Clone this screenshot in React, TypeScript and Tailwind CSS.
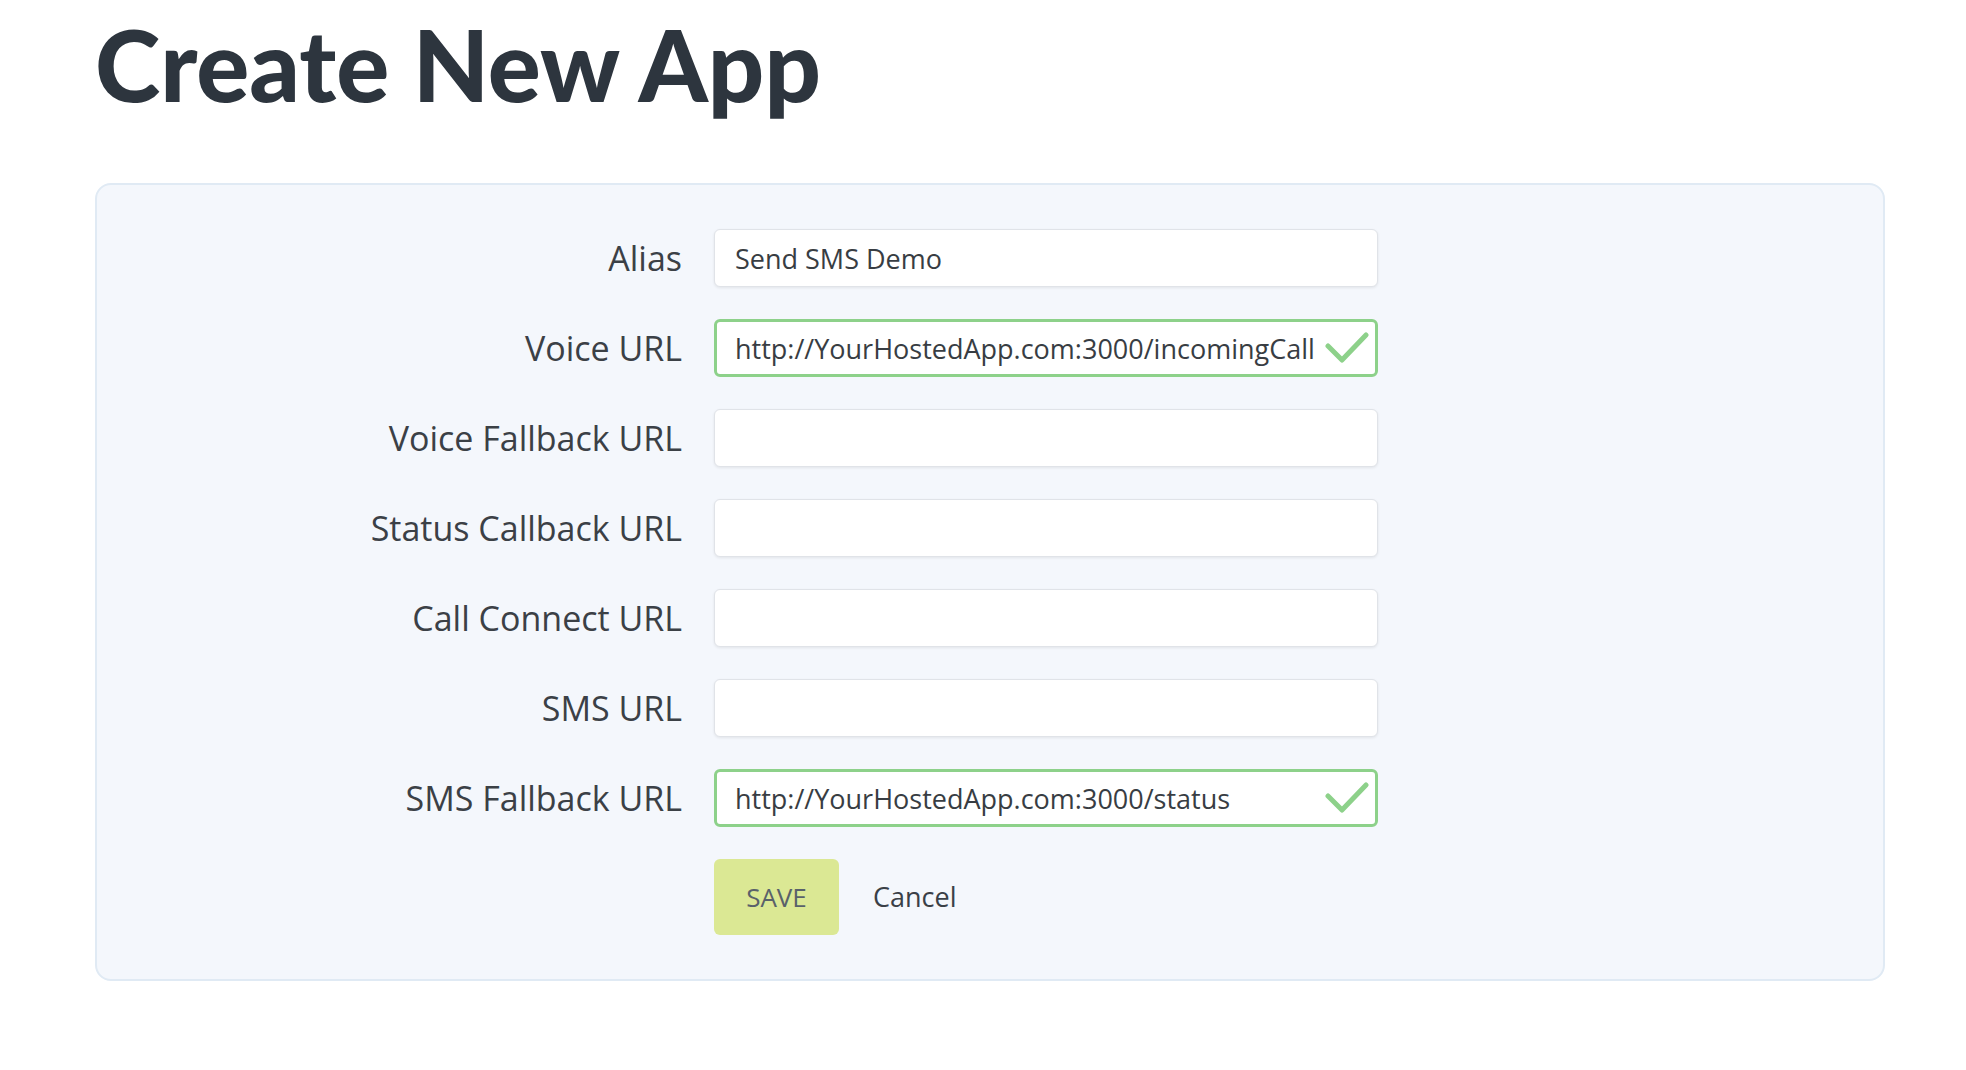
import React from 'react';

interface Field {
  label: string;
  value: string;
  valid: boolean;
}

const fields: Field[] = [
  { label: 'Alias', value: 'Send SMS Demo', valid: false },
  { label: 'Voice URL', value: 'http://YourHostedApp.com:3000/incomingCall', valid: true },
  { label: 'Voice Fallback URL', value: '', valid: false },
  { label: 'Status Callback URL', value: '', valid: false },
  { label: 'Call Connect URL', value: '', valid: false },
  { label: 'SMS URL', value: '', valid: false },
  { label: 'SMS Fallback URL', value: 'http://YourHostedApp.com:3000/status', valid: true },
];

function Check() {
  return (
    <svg
      className="pointer-events-none absolute right-[9px] top-1/2 -translate-y-1/2"
      width="44"
      height="32"
      viewBox="0 0 44 32"
      fill="none"
    >
      <path
        d="M3 14 L17 28 L41 3"
        stroke="#8dd18a"
        strokeWidth="5"
        strokeLinecap="round"
        strokeLinejoin="round"
      />
    </svg>
  );
}

export default function App() {
  return (
    <div className="min-h-screen bg-white pl-[95px] pr-[81px] font-['Open_Sans',sans-serif]">
      <h1 className="pt-[14px] font-['Lato',sans-serif] text-[99px] font-black leading-none text-[#2d353e]">
        Create New App
      </h1>

      <div className="mt-[70px] rounded-2xl border-2 border-[#e0eaf4] bg-[#f4f7fc] py-[44px]">
        <div className="flex flex-col gap-[32px]">
          {fields.map((field) => (
            <div key={field.label} className="flex items-center">
              <label className="w-[617px] shrink-0 pr-[32px] text-right text-[34px] leading-none text-[#3b4046]">
                {field.label}
              </label>
              <div className="relative w-[664px]">
                <input
                  readOnly
                  value={field.value}
                  className={`h-[58px] w-full rounded-md bg-white text-[27px] text-[#383d43] outline-none ${
                    field.valid
                      ? 'border-[3px] border-[#8dd18a] pl-[18px] pr-[56px]'
                      : 'border border-[#e0e3e8] pl-[20px] shadow-[0_1px_3px_rgba(0,0,0,0.08)]'
                  }`}
                />
                {field.valid && <Check />}
              </div>
            </div>
          ))}

          <div className="flex items-center pl-[617px]">
            <button className="h-[76px] w-[125px] rounded-md bg-[#dbe894] text-[26px] text-[#59616a]">
              SAVE
            </button>
            <button className="ml-[34px] text-[27px] text-[#3a4047]">Cancel</button>
          </div>
        </div>
      </div>
    </div>
  );
}
